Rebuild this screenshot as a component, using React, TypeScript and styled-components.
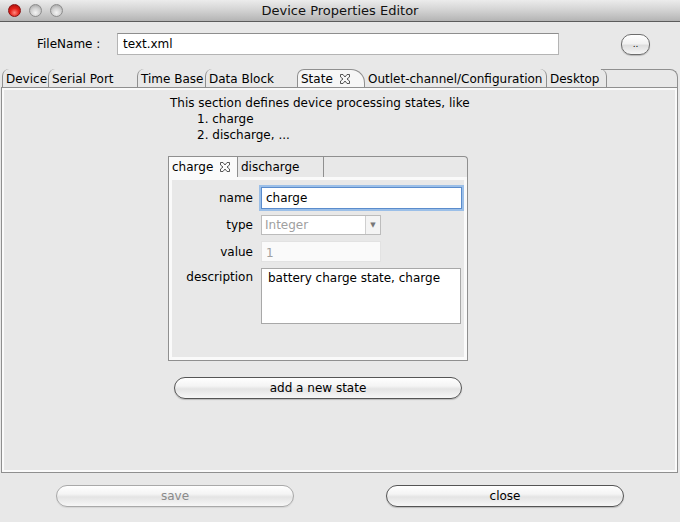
import React from "react";
import styled, { createGlobalStyle } from "styled-components";

const Global = createGlobalStyle`
  html, body { margin: 0; padding: 0; background: #e8e8e8; }
  body { font-family: "DejaVu Sans", "Liberation Sans", sans-serif; font-size: 11px; color: #000; }
  * { box-sizing: border-box; }
`;

const Window = styled.div`
  width: 680px;
  height: 522px;
  background: #e8e8e8;
  display: flex;
  flex-direction: column;
  overflow: hidden;
`;

const TitleBar = styled.div`
  height: 22px;
  flex: none;
  display: flex;
  align-items: center;
  position: relative;
  background: linear-gradient(#ececec, #d2d2d2 50%, #b4b4b4);
  border-bottom: 1px solid #5c5c5c;
`;

const Lights = styled.div`
  display: flex;
  gap: 8px;
  padding-left: 8px;
`;

const Light = styled.span<{ $red?: boolean }>`
  width: 13px;
  height: 13px;
  border-radius: 50%;
  border: 1px solid ${(p) => (p.$red ? "#8a1010" : "#8c8c8c")};
  background: ${(p) =>
    p.$red
      ? "radial-gradient(circle at 50% 70%, #ff8a80 0%, #e5221a 45%, #9c0d08 100%)"
      : "radial-gradient(circle at 50% 70%, #f4f4f4 0%, #cfcfcf 50%, #9a9a9a 100%)"};
`;

const Title = styled.div`
  position: absolute;
  left: 0;
  right: 0;
  text-align: center;
  font-size: 13px;
  color: #111;
  pointer-events: none;
`;

const FileRow = styled.div`
  display: flex;
  align-items: center;
  height: 22px;
  margin-top: 11px;
  flex: none;
`;

const FileLabel = styled.span`
  width: 117px;
  padding-left: 37px;
  font-size: 12px;
`;

const TextField = styled.div<{ $w: number }>`
  width: ${(p) => p.$w}px;
  height: 22px;
  background: #fff;
  border: 1px solid #b4b4b4;
  border-top-color: #8e8e8e;
  display: flex;
  align-items: center;
  padding-left: 5px;
  font-size: 12px;
`;

const SmallButton = styled.div`
  margin-left: 62px;
  width: 29px;
  height: 21px;
  border-radius: 10px;
  border: 1px solid #6d6d6d;
  background: linear-gradient(#ffffff, #f2f2f2 45%, #dedede 55%, #f6f6f6);
  box-shadow: 0 1px 1px rgba(0, 0, 0, 0.2);
  display: flex;
  align-items: center;
  justify-content: center;
  font-size: 9px;
  line-height: 1;
`;

const TabStrip = styled.div`
  display: flex;
  margin-top: 14px;
  height: 18px;
  padding-left: 2px;
  flex: none;
  align-items: stretch;
`;

type Side = "left" | "right" | "sel";

const Tab = styled.div<{ $w: number; $side: Side }>`
  width: ${(p) => p.$w}px;
  flex: none;
  display: flex;
  align-items: center;
  padding-left: 3px;
  padding-top: 1px;
  font-size: 12px;
  gap: 7px;
  background: ${(p) => (p.$side === "sel" ? "#f6f6f6" : "#e8e8e8")};
  ${(p) =>
    p.$side === "left"
      ? `border-left: 1px solid #8f8f8f; border-top-left-radius: 7px;`
      : p.$side === "right"
      ? `border-right: 1px solid #8f8f8f; border-top-right-radius: 7px;`
      : `border-left: 1px solid #8f8f8f; border-top: 1px solid #8f8f8f; border-right: 1px solid #8f8f8f;
         border-top-left-radius: 7px; border-top-right-radius: 14px;`}
`;

const TabFill = styled.div`
  flex: 1;
  margin-right: 2px;
  margin-left: -6px;
  border-top: 1px solid #8f8f8f;
  border-right: 1px solid #8f8f8f;
  border-top-right-radius: 8px;
`;

const CloseIcon = () => (
  <svg width="10" height="10" viewBox="0 0 10 10">
    <path
      d="M0.5 0.5 L3 0.5 L5 3 L7 0.5 L9.5 0.5 L9.5 3 L7 5 L9.5 7 L9.5 9.5 L7 9.5 L5 7 L3 9.5 L0.5 9.5 L0.5 7 L3 5 L0.5 3 Z"
      fill="none"
      stroke="#444"
      strokeWidth="0.9"
    />
  </svg>
);

const Panel = styled.div`
  margin: 0 2px 0 1px;
  height: 386px;
  flex: none;
  border: 1px solid #8f8f8f;
  box-shadow: inset 0 0 0 2px #fafafa;
  background: #e8e8e8;
  display: flex;
  flex-direction: column;
  align-items: flex-start;
`;

const Intro = styled.div`
  margin-top: 7px;
  margin-left: 168px;
  font-size: 12px;
  line-height: 16px;
`;

const IntroItem = styled.div`
  padding-left: 27px;
`;

const InnerPane = styled.div`
  margin-top: 13px;
  width: 300px;
  margin-left: 166px;
  display: flex;
  flex-direction: column;
`;

const InnerStrip = styled.div`
  display: flex;
  height: 21px;
  border: 1px solid #8f8f8f;
  border-bottom: none;
  border-top-right-radius: 4px;
  background: #e8e8e8;
`;

const InnerTab = styled.div<{ $w: number; $sel?: boolean }>`
  width: ${(p) => p.$w}px;
  display: flex;
  align-items: center;
  gap: 7px;
  padding-left: 3px;
  font-size: 12px;
  border-right: 1px solid #8f8f8f;
  background: ${(p) => (p.$sel ? "#fafafa" : "#e8e8e8")};
`;

const InnerBody = styled.div`
  height: 184px;
  border: 1px solid #8f8f8f;
  border-top: none;
  box-shadow: inset 0 0 0 3px #fafafa;
  display: grid;
  grid-template-columns: 84px 200px;
  column-gap: 8px;
  row-gap: 6px;
  align-content: start;
  padding-top: 10px;
`;

const Label = styled.div<{ $top?: boolean }>`
  text-align: right;
  font-size: 12px;
  align-self: ${(p) => (p.$top ? "start" : "center")};
  padding-top: ${(p) => (p.$top ? "2px" : "0")};
`;

const FocusField = styled.div`
  width: 201px;
  height: 22px;
  background: #fff;
  border: 1px solid #5b8ccc;
  box-shadow: 0 0 0 2px #9bbfe8;
  display: flex;
  align-items: center;
  padding-left: 4px;
  font-size: 12px;
`;

const Combo = styled.div`
  width: 120px;
  height: 20px;
  background: #fff;
  border: 1px solid #bcbcbc;
  display: flex;
  align-items: stretch;
  font-size: 12px;
  color: #a0a0a0;
`;

const ComboText = styled.div`
  flex: 1;
  display: flex;
  align-items: center;
  padding-left: 3px;
`;

const ComboArrow = styled.div`
  width: 15px;
  border-left: 1px solid #cfcfcf;
  background: #f4f4f4;
  display: flex;
  align-items: center;
  justify-content: center;
  font-size: 7px;
  color: #777;
`;

const ValueField = styled.div`
  width: 120px;
  height: 21px;
  background: #fafafa;
  border: 1px solid #e2e2e2;
  display: flex;
  align-items: center;
  padding-left: 4px;
  padding-top: 3px;
  font-size: 12px;
  color: #a0a0a0;
`;

const TextArea = styled.div`
  width: 200px;
  height: 56px;
  background: #fff;
  border: 1px solid #a8a8a8;
  padding: 2px 6px;
  font-size: 12px;
`;

const PillButton = styled.div<{ $w: number; $disabled?: boolean }>`
  width: ${(p) => p.$w}px;
  height: 22px;
  border-radius: 11px;
  border: 1px solid ${(p) => (p.$disabled ? "#a9a9a9" : "#555")};
  background: linear-gradient(#ffffff, #f4f4f4 40%, #e4e4e4 55%, #f7f7f7);
  box-shadow: 0 1px 1px rgba(0, 0, 0, ${(p) => (p.$disabled ? 0.08 : 0.2)});
  display: flex;
  align-items: center;
  justify-content: center;
  font-size: 12px;
  color: ${(p) => (p.$disabled ? "#8a8a8a" : "#000")};
  flex: none;
`;

const AddRow = styled.div`
  margin-top: 16px;
  margin-left: 172px;
`;

const Footer = styled.div`
  display: flex;
  gap: 92px;
  padding-left: 56px;
  margin-top: 12px;
`;

export default function App() {
  return (
    <>
      <Global />
      <Window>
        <TitleBar>
          <Lights>
            <Light $red />
            <Light />
            <Light />
          </Lights>
          <Title>Device Properties Editor</Title>
        </TitleBar>
        <FileRow>
          <FileLabel>FileName :</FileLabel>
          <TextField $w={442}>text.xml</TextField>
          <SmallButton>..</SmallButton>
        </FileRow>
        <TabStrip>
          <Tab $w={46} $side="left">Device</Tab>
          <Tab $w={89} $side="left">Serial Port</Tab>
          <Tab $w={68} $side="left">Time Base</Tab>
          <Tab $w={92} $side="left">Data Block</Tab>
          <Tab $w={68} $side="sel">
            State <CloseIcon />
          </Tab>
          <Tab $w={182} $side="right">Outlet-channel/Configuration</Tab>
          <Tab $w={60} $side="right">Desktop</Tab>
          <TabFill />
        </TabStrip>
        <Panel>
          <Intro>
            This section defines device processing states, like
            <IntroItem>1. charge</IntroItem>
            <IntroItem>2. discharge, ...</IntroItem>
          </Intro>
          <InnerPane>
            <InnerStrip>
              <InnerTab $w={69} $sel>
                charge <CloseIcon />
              </InnerTab>
              <InnerTab $w={86}>discharge</InnerTab>
            </InnerStrip>
            <InnerBody>
              <Label>name</Label>
              <FocusField>charge</FocusField>
              <Label>type</Label>
              <Combo>
                <ComboText>Integer</ComboText>
                <ComboArrow>▼</ComboArrow>
              </Combo>
              <Label>value</Label>
              <ValueField>1</ValueField>
              <Label $top>description</Label>
              <TextArea>battery charge state, charge</TextArea>
            </InnerBody>
          </InnerPane>
          <AddRow>
            <PillButton $w={288}>add a new state</PillButton>
          </AddRow>
        </Panel>
        <Footer>
          <PillButton $w={238} $disabled>
            save
          </PillButton>
          <PillButton $w={238}>close</PillButton>
        </Footer>
      </Window>
    </>
  );
}
